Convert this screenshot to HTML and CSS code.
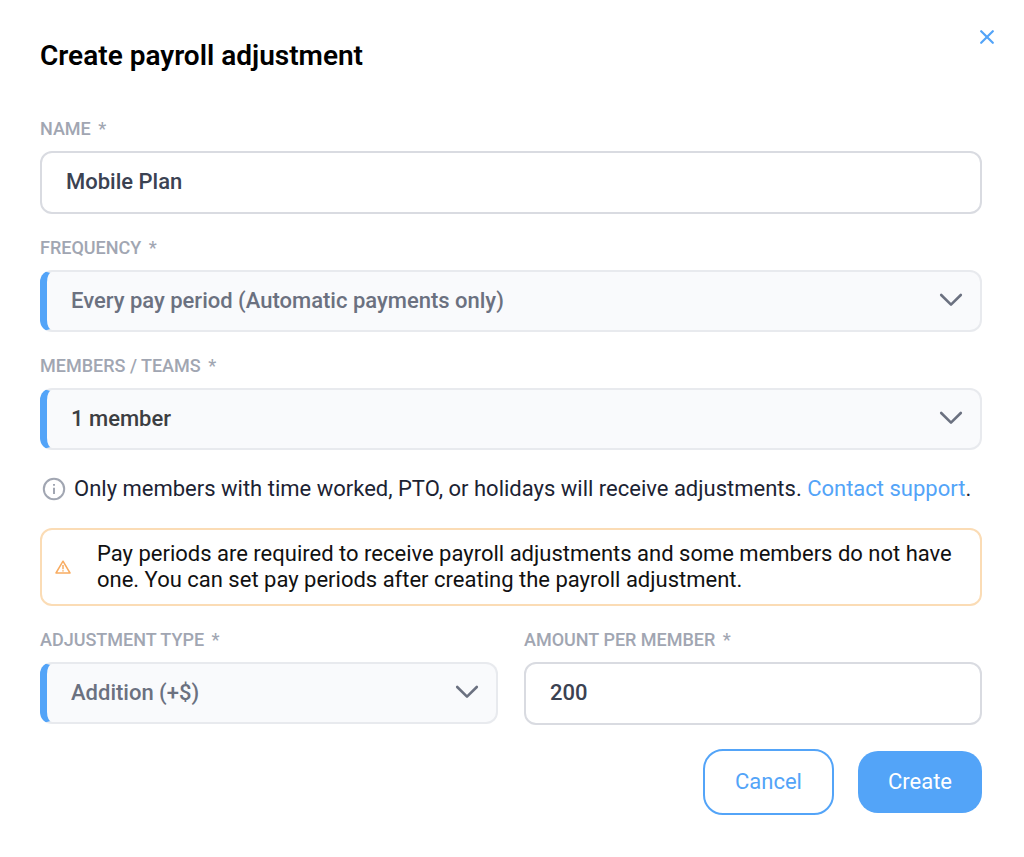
FILE: index.html
```html
<!DOCTYPE html>
<html lang="en">
<head>
<meta charset="utf-8">
<meta name="viewport" content="width=device-width, initial-scale=1">
<title>Create payroll adjustment</title>
<link rel="stylesheet" href="styles.css">
</head>
<body>
<main class="dialog">
  <header class="dialog-header">
    <h1 class="title">Create payroll adjustment</h1>
    <button class="close" type="button" aria-label="Close">
      <svg width="14" height="14" viewBox="0 0 14 14" aria-hidden="true"><path d="M1.2 1.2L12.8 12.8M12.8 1.2L1.2 12.8"/></svg>
    </button>
  </header>
  <form class="form">
    <div class="field">
      <label class="label" for="name">NAME <span class="required">*</span></label>
      <input class="input" id="name" type="text" value="Mobile Plan">
    </div>
    <div class="field">
      <label class="label" for="frequency">FREQUENCY <span class="required">*</span></label>
      <div class="select-wrap">
        <select class="select" id="frequency"><option>Every pay period (Automatic payments only)</option></select>
        <svg class="chevron" viewBox="0 0 24 14" aria-hidden="true"><path d="M2.2 2L12 11.6L21.8 2"/></svg>
      </div>
    </div>
    <div class="field">
      <label class="label" for="members">MEMBERS / TEAMS <span class="required">*</span></label>
      <div class="select-wrap">
        <select class="select select-chosen" id="members"><option>1 member</option></select>
        <svg class="chevron" viewBox="0 0 24 14" aria-hidden="true"><path d="M2.2 2L12 11.6L21.8 2"/></svg>
      </div>
    </div>
    <div class="info">
      <svg class="info-icon" viewBox="0 0 24 24" aria-hidden="true"><circle cx="12" cy="12" r="10.2"/><path d="M12 10.8V17M12 7V8.8"/></svg>
      <p class="info-text">Only members with time worked, PTO, or holidays will receive adjustments. <a class="link" href="#">Contact support</a>.</p>
    </div>
    <div class="alert" role="alert">
      <svg class="alert-icon" viewBox="0 0 16 14" aria-hidden="true"><path d="M8 1.2L15 13H1Z"/><path d="M8 5V9.2M8 10.2V11.6"/></svg>
      <p class="alert-text">Pay periods are required to receive payroll adjustments and some members do not have one. You can set pay periods after creating the payroll adjustment.</p>
    </div>
    <div class="row">
      <div class="field">
        <label class="label" for="type">ADJUSTMENT TYPE <span class="required">*</span></label>
        <div class="select-wrap">
          <select class="select" id="type"><option>Addition (+$)</option></select>
          <svg class="chevron" viewBox="0 0 24 14" aria-hidden="true"><path d="M2.2 2L12 11.6L21.8 2"/></svg>
        </div>
      </div>
      <div class="field">
        <label class="label" for="amount">AMOUNT PER MEMBER <span class="required">*</span></label>
        <input class="input" id="amount" type="text" inputmode="decimal" value="200">
      </div>
    </div>
    <div class="actions">
      <button class="button button-outline" type="button">Cancel</button>
      <button class="button button-primary" type="submit">Create</button>
    </div>
  </form>
</main>
</body>
</html>
```
FILE: styles.css
```css
* {
  box-sizing: border-box;
}

body {
  margin: 0;
  background: #fff;
  color: #111;
  font-family: Roboto, "Liberation Sans", sans-serif;
  font-size: 22px;
  line-height: 26px;
}

p {
  margin: 0;
}

.dialog {
  padding: 24px 42px 40px 40px;
}

.dialog-header {
  display: flex;
  justify-content: space-between;
  align-items: flex-start;
  margin-right: -18px;
  margin-bottom: 44px;
}

.title {
  margin: 13px 0 0;
  color: #000;
  font-size: 28px;
  font-weight: 600;
  line-height: 38px;
}

.close {
  display: flex;
  padding: 6px;
  border: 0;
  background: none;
  cursor: pointer;
}

.close svg {
  fill: none;
  stroke: #53a4f8;
  stroke-width: 2.2;
  stroke-linecap: round;
}

.form {
  display: flex;
  flex-direction: column;
  gap: 24px;
}

.field {
  display: flex;
  flex-direction: column;
  gap: 12px;
  min-width: 0;
}

.label {
  color: #a1a6b2;
  font-size: 18px;
  font-weight: 500;
  line-height: 20px;
}

.required {
  margin-left: 3px;
}

.input,
.select {
  width: 100%;
  font: inherit;
  font-weight: 500;
  border-radius: 12px;
}

.input {
  height: 63px;
  padding: 0 24px 2px;
  border: 2px solid #d9dbe1;
  background: #fff;
  color: #3b4252;
}

.select-wrap {
  position: relative;
}

.select {
  display: block;
  height: 62px;
  padding: 0 60px 0 24px;
  appearance: none;
  border: 2px solid #e8eaee;
  border-left: 7px solid #53a4f8;
  background: #f9fafc;
  color: #6b7180;
}

.select-chosen {
  color: #3c3e42;
}

.chevron {
  position: absolute;
  top: 23px;
  right: 19px;
  width: 24px;
  height: 14px;
  fill: none;
  stroke: #6b7180;
  stroke-width: 2.6;
  stroke-linecap: round;
  stroke-linejoin: round;
  pointer-events: none;
}

.info {
  display: flex;
  align-items: center;
  gap: 8px;
  padding: 2px;
  color: #1c2333;
}

.info-icon {
  flex: none;
  width: 24px;
  height: 24px;
  fill: none;
  stroke: #a1a6b2;
  stroke-width: 2;
}

.link {
  color: #53a4f8;
  text-decoration: none;
}

.alert {
  display: flex;
  align-items: center;
  gap: 26px;
  padding: 11px 13px;
  border: 2px solid #fbdcb5;
  border-radius: 12px;
}

.alert-icon {
  flex: none;
  width: 16px;
  height: 14px;
  fill: none;
  stroke: #f8ac61;
  stroke-width: 1.5;
  stroke-linejoin: round;
}

.row {
  display: grid;
  grid-template-columns: 1fr 1fr;
  gap: 26px;
}

.actions {
  display: flex;
  justify-content: flex-end;
  align-items: center;
  gap: 24px;
}

.button {
  padding: 18px 30px;
  border: 0;
  border-radius: 20px;
  font: inherit;
  cursor: pointer;
}

.button-outline {
  border: 2px solid #53a4f8;
  background: #fff;
  color: #53a4f8;
}

.button-primary {
  background: #53a4f8;
  color: #fff;
}
```
